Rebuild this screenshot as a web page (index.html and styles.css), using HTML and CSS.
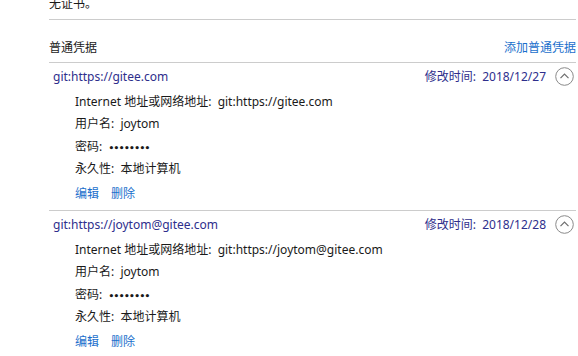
FILE: index.html
```html
<!DOCTYPE html>
<html lang="zh-CN">
<head>
  <meta charset="UTF-8" />
  <title>凭据管理器</title>
  <link rel="stylesheet" href="styles.css">
</head>
<body>
  <div class="panel">
    <p class="intro">无证书。</p>

    <div class="section-head">
      <span class="section-title">普通凭据</span>
      <a class="link" href="#">添加普通凭据</a>
    </div>

    <div class="cred">
      <div class="cred-head">
        <span class="cred-name">git:https://gitee.com</span>
        <span class="cred-date">修改时间:&nbsp;&nbsp;2018/12/27</span>
        <span class="toggle">
          <svg width="19" height="19" viewBox="0 0 19 19"><circle cx="9.5" cy="9.5" r="8.8" fill="none" stroke="#8a8a8a" stroke-width="1"/><path d="M5.5 11.2 L9.5 7.2 L13.5 11.2" fill="none" stroke="#6e6e6e" stroke-width="1.2"/></svg>
        </span>
      </div>
      <div class="cred-body">
        <div class="row">Internet 地址或网络地址:&nbsp;&nbsp;git:https://gitee.com</div>
        <div class="row">用户名:&nbsp;&nbsp;joytom</div>
        <div class="row">密码:&nbsp;&nbsp;<span class="dots">••••••••</span></div>
        <div class="row">永久性:&nbsp;&nbsp;本地计算机</div>
      </div>
      <div class="actions">
        <a class="link" href="#">编辑</a>
        <a class="link" href="#">删除</a>
      </div>
    </div>

    <div class="cred">
      <div class="cred-head">
        <span class="cred-name">git:https://joytom@gitee.com</span>
        <span class="cred-date">修改时间:&nbsp;&nbsp;2018/12/28</span>
        <span class="toggle">
          <svg width="19" height="19" viewBox="0 0 19 19"><circle cx="9.5" cy="9.5" r="8.8" fill="none" stroke="#8a8a8a" stroke-width="1"/><path d="M5.5 11.2 L9.5 7.2 L13.5 11.2" fill="none" stroke="#6e6e6e" stroke-width="1.2"/></svg>
        </span>
      </div>
      <div class="cred-body">
        <div class="row">Internet 地址或网络地址:&nbsp;&nbsp;git:https://joytom@gitee.com</div>
        <div class="row">用户名:&nbsp;&nbsp;joytom</div>
        <div class="row">密码:&nbsp;&nbsp;<span class="dots">••••••••</span></div>
        <div class="row">永久性:&nbsp;&nbsp;本地计算机</div>
      </div>
      <div class="actions">
        <a class="link" href="#">编辑</a>
        <a class="link" href="#">删除</a>
      </div>
    </div>
  </div>
</body>
</html>
```

FILE: styles.css
```css
body {
  margin: 0;
  background: #fff;
  font-family: "Noto Sans", "Noto Sans CJK SC", sans-serif;
  font-size: 12px;
  color: #1a1a1a;
  overflow: hidden;
}
.panel {
  margin-left: 49px;
  padding-right: 2px;
}
.intro {
  margin: -7px 0 0 0;
  height: 22px;
  line-height: 22px;
  padding-bottom: 4px;
  border-bottom: 1px solid #cccccc;
}
.section-head {
  display: flex;
  justify-content: space-between;
  align-items: center;
  margin-top: 17px;
  height: 22px;
  line-height: 22px;
  padding-bottom: 3px;
}
.link {
  color: #1a6fcc;
  text-decoration: none;
}
.cred {
  border-top: 1px solid #cccccc;
  height: 147px;
}
.cred-head {
  display: flex;
  align-items: center;
  height: 26px;
  padding-left: 4px;
  color: #2e2e8c;
}
.cred-name {
  flex: 1;
}
.cred-date {
  margin-right: 9px;
}
.toggle {
  display: flex;
  margin-right: 2px;
}
.cred-body {
  margin-top: 2px;
  padding-left: 26px;
}
.row {
  height: 22.3px;
  line-height: 22.3px;
  white-space: nowrap;
}
.dots {
  font-family: "DejaVu Sans", sans-serif;
  font-size: 9px;
  font-weight: bold;
  letter-spacing: -0.6px;
}
.actions {
  margin-top: 3px;
  padding-left: 26px;
  display: flex;
  gap: 12px;
  height: 22px;
  line-height: 22px;
}
```
